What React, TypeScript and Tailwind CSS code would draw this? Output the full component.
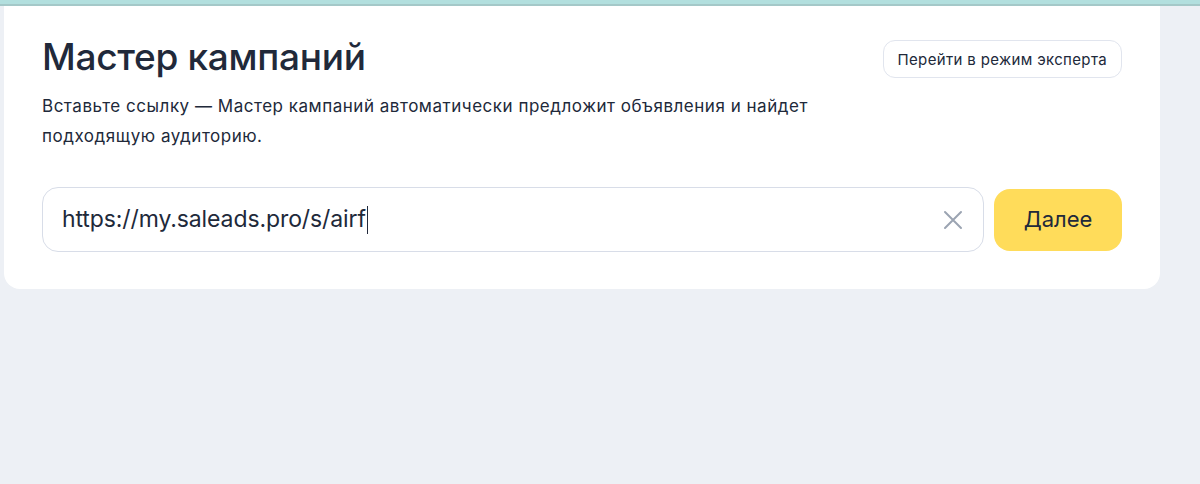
import { useState } from 'react'

export default function App() {
  const [url, setUrl] = useState('https://my.saleads.pro/s/airf')

  return (
    <div className="min-h-[484px] w-full bg-[#edf0f5] font-['Inter',sans-serif] text-[#21293a]">
      {/* top strip */}
      <div className="h-[4px] bg-[#b2dfde]" />
      <div className="h-[2px] bg-[#a4c8c8]" />

      <div className="ml-[4px] w-[1156px] rounded-b-[16px] bg-white px-[38px] pt-[28px] pb-[37px]">
        <div className="flex items-start justify-between">
          <div>
            <h1 className="text-[37px] leading-[46px] font-medium tracking-[-0.3px]">Мастер кампаний</h1>
            <p className="mt-[11px] w-[820px] text-[17px] leading-[30px] tracking-[0.52px]">
              Вставьте ссылку — Мастер кампаний автоматически предложит объявления и найдет подходящую аудиторию.
            </p>
          </div>
          <button className="mt-[6px] h-[38px] rounded-[12px] border border-[#e1e5ee] px-[14px] text-[15px] leading-none tracking-[0.35px]">
            Перейти в режим эксперта
          </button>
        </div>

        <div className="mt-[36px] flex items-center gap-[10px]">
          <div className="flex h-[65px] flex-1 items-center rounded-[16px] border border-[#d8dde8] pl-[19px] pr-[18px]">
            <div className="flex flex-1 items-center text-[23px] tracking-[-0.1px]">
              <span>{url}</span>
              <span className="ml-[1px] h-[28px] w-[1.5px] bg-[#21293a]" />
            </div>
            <button onClick={() => setUrl('')} className="flex h-[24px] w-[24px] items-center justify-center">
              <svg width="20" height="20" viewBox="0 0 20 20" fill="none" stroke="#9ba4b2" strokeWidth="2" strokeLinecap="round">
                <path d="M2 2L18 18M18 2L2 18" />
              </svg>
            </button>
          </div>
          <button className="h-[62px] w-[128px] rounded-[16px] bg-[#ffdc5a] text-[22px]">Далее</button>
        </div>
      </div>
    </div>
  )
}
